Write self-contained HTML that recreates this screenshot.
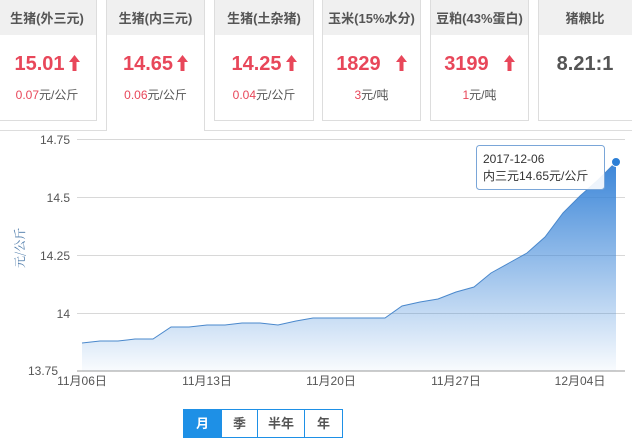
<!DOCTYPE html>
<html><head><meta charset="utf-8"><style>
*{margin:0;padding:0;box-sizing:border-box}
body{width:632px;height:441px;background:#fff;position:relative;overflow:hidden;font-family:"Liberation Sans","Noto Sans CJK SC",sans-serif}
.ln{position:absolute;background:#ddd}
.box{position:absolute;top:-2px;height:123px;border:1px solid #ddd;border-top:none;background:#fff}
.hd{position:absolute;left:0;right:0;top:2px;height:35px;background:#f0f0f0;text-align:center;font-size:13px;font-weight:bold;color:#555;line-height:37px}
.v{position:absolute;left:0;right:0;top:55px;text-align:center;font-size:20px;font-weight:bold;color:#e8475a}
.s{position:absolute;left:0;right:0;top:88px;text-align:center;font-size:12px;color:#555}
.s b{font-weight:normal;color:#e8475a}
.ar{display:inline-block;width:11px;height:16px;vertical-align:-1px;margin-left:4px}
.btns{position:absolute;left:183px;top:409px;height:29px;width:160px;border:1px solid #1e90e6;display:flex;font-size:13px;color:#555;font-weight:bold}
.btns div{text-align:center;line-height:27px;border-left:1px solid #1e90e6}
</style></head><body>
<div class="ln" style="left:0;top:130px;width:106px;height:1px"></div>
<div class="ln" style="left:204px;top:130px;width:428px;height:1px"></div>
<div class="ln" style="left:106px;top:0;width:1px;height:131px"></div>
<div class="ln" style="left:204px;top:0;width:1px;height:131px"></div>

<div class="box" style="left:-3px;width:100px"><div class="hd">生猪(外三元)</div><div class="v">15.01<svg class="ar" viewBox="0 0 11 16"><path d="M5.5,0 L11,7 L7.5,7 L7.5,16 L3.5,16 L3.5,7 L0,7 Z" fill="#e8475a"/></svg></div><div class="s"><b>0.07</b>元/公斤</div></div>
<div class="box" style="left:107px;width:97px;border:none;height:130px"><div class="hd">生猪(内三元)</div><div class="v">14.65<svg class="ar" viewBox="0 0 11 16"><path d="M5.5,0 L11,7 L7.5,7 L7.5,16 L3.5,16 L3.5,7 L0,7 Z" fill="#e8475a"/></svg></div><div class="s"><b>0.06</b>元/公斤</div></div>
<div class="box" style="left:214px;width:100px"><div class="hd">生猪(土杂猪)</div><div class="v">14.25<svg class="ar" viewBox="0 0 11 16"><path d="M5.5,0 L11,7 L7.5,7 L7.5,16 L3.5,16 L3.5,7 L0,7 Z" fill="#e8475a"/></svg></div><div class="s"><b>0.04</b>元/公斤</div></div>
<div class="box" style="left:322px;width:99px"><div class="hd">玉米(15%水分)</div><div class="v">1829 &nbsp;<svg class="ar" viewBox="0 0 11 16"><path d="M5.5,0 L11,7 L7.5,7 L7.5,16 L3.5,16 L3.5,7 L0,7 Z" fill="#e8475a"/></svg></div><div class="s"><b>3</b>元/吨</div></div>
<div class="box" style="left:430px;width:99px"><div class="hd">豆粕(43%蛋白)</div><div class="v">3199 &nbsp;<svg class="ar" viewBox="0 0 11 16"><path d="M5.5,0 L11,7 L7.5,7 L7.5,16 L3.5,16 L3.5,7 L0,7 Z" fill="#e8475a"/></svg></div><div class="s"><b>1</b>元/吨</div></div>
<div class="box" style="left:538px;width:100px"><div class="hd" style="padding-right:6px">猪粮比</div><div class="v" style="color:#555;padding-right:6px">8.21:1</div></div>

<svg style="position:absolute;left:0;top:0" width="632" height="441">
<defs><linearGradient id="g" x1="0" y1="0" x2="0" y2="1"><stop offset="0" stop-color="#3a85d8"/><stop offset="1" stop-color="#3a85d8" stop-opacity="0.03"/></linearGradient></defs>
<g stroke="#d8d8d8" stroke-width="1">
<line x1="77" y1="139.5" x2="625" y2="139.5"/><line x1="77" y1="197.5" x2="625" y2="197.5"/><line x1="77" y1="255.5" x2="625" y2="255.5"/><line x1="77" y1="313.5" x2="625" y2="313.5"/>
</g>
<line x1="77" y1="371" x2="625" y2="371" stroke="#ccc" stroke-width="2"/>
<path d="M82,343 L100,341 L118,341 L135,339 L153,339 L171,327 L189,327 L207,325 L225,325 L242,323 L260,323 L278,325 L296,321 L313,318 L331,318 L349,318 L367,318 L385,318 L402,306 L420,302 L438,299 L456,292 L474,287 L491,273 L509,263 L527,253 L545,237 L563,213 L580,196 L598,180 L616,162 L616,371 L82,371 Z" fill="url(#g)"/>
<path d="M82,343 L100,341 L118,341 L135,339 L153,339 L171,327 L189,327 L207,325 L225,325 L242,323 L260,323 L278,325 L296,321 L313,318 L331,318 L349,318 L367,318 L385,318 L402,306 L420,302 L438,299 L456,292 L474,287 L491,273 L509,263 L527,253 L545,237 L563,213 L580,196 L598,180 L616,162" fill="none" stroke="#4a88cc" stroke-width="1"/>
<circle cx="616" cy="162" r="4.5" fill="#2c7fd6" stroke="#fff" stroke-width="1"/>
<g font-size="12" fill="#555" text-anchor="end" font-family="Liberation Sans,sans-serif">
<text x="70" y="144">14.75</text><text x="70" y="202">14.5</text><text x="70" y="260">14.25</text><text x="70" y="318">14</text><text x="58" y="375">13.75</text>
</g>
<g font-size="12" fill="#555" text-anchor="middle" font-family="Liberation Sans,Noto Sans CJK SC,sans-serif">
<text x="82" y="385">11月06日</text><text x="207" y="385">11月13日</text><text x="331" y="385">11月20日</text><text x="456" y="385">11月27日</text><text x="580" y="385">12月04日</text>
</g>
<text transform="translate(24,268) rotate(-90)" font-size="12" fill="#4a78a8" font-family="Noto Serif CJK SC,serif">元/公斤</text>
<rect x="476.5" y="145.5" width="128" height="44" rx="3" fill="#fff" fill-opacity="0.9" stroke="#7aa6d8"/>
<text x="483" y="163" font-size="12" fill="#333">2017-12-06</text>
<text x="483" y="180" font-size="12" fill="#333" font-family="Liberation Sans,Noto Sans CJK SC,sans-serif">内三元14.65元/公斤</text>
</svg>
<div class="btns"><div style="width:37px;background:#1e90e6;color:#fff;border:none">月</div><div style="width:36px">季</div><div style="width:47px">半年</div><div style="flex:1">年</div></div>
</body></html>
